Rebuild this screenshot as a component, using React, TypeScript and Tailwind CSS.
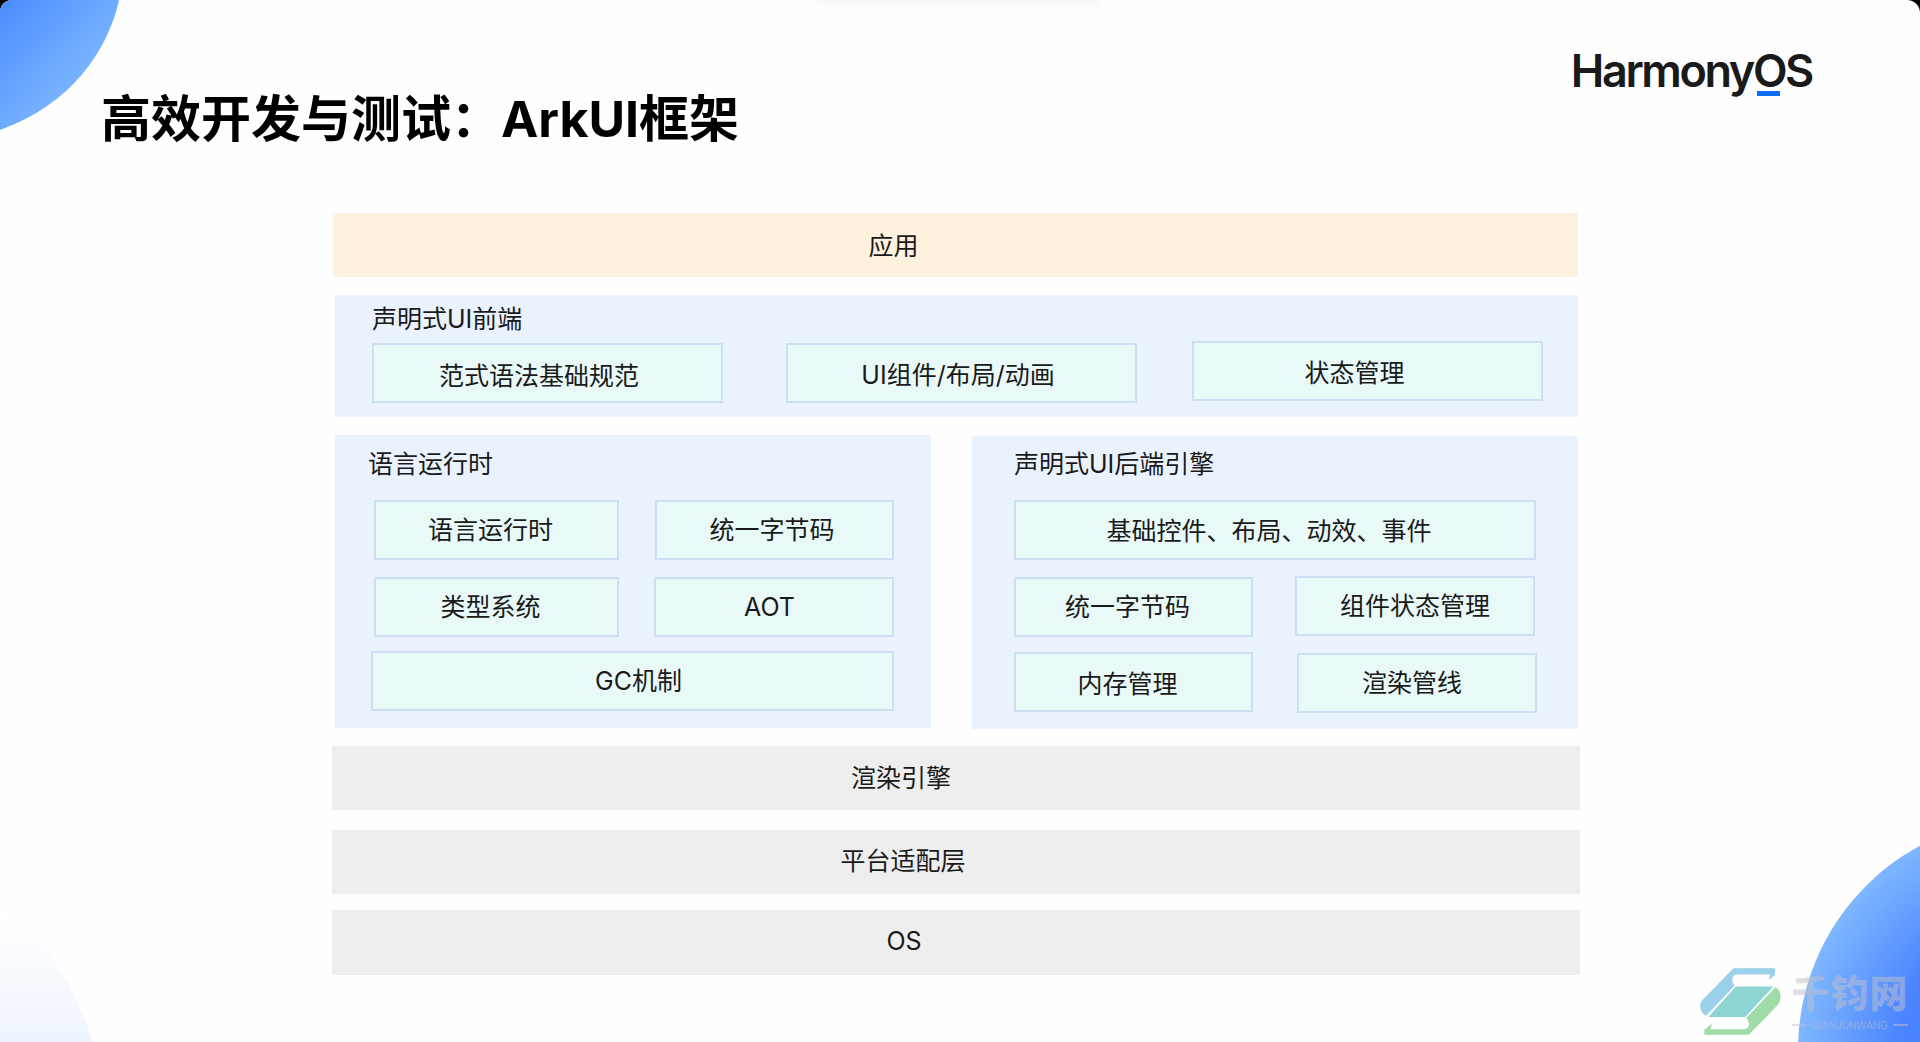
const Box = ({ t, c }: { t: string; c: string }) => (
  <div className={`flex items-center justify-center border-[2px] border-[#cbdef2] bg-[#e9f9f8] text-[25px] leading-none text-[#1a1a1a] ${c}`}>{t}</div>
);

const Bar = ({ t, c }: { t: string; c: string }) => (
  <div className={`flex items-center justify-center text-[25px] leading-none text-[#1a1a1a] ${c}`}>{t}</div>
);

export default function App() {
  return (
    <div className="h-[1042px] w-[1920px] bg-black">
      <div className="relative h-[1042px] w-[1920px] overflow-hidden rounded-tl-[12px] rounded-tr-[13px] bg-[#fefefe] font-['Inter','Noto_Sans_CJK_SC',sans-serif]">
        <svg className="absolute left-0 top-0 h-[1042px] w-[1920px]" viewBox="0 0 1920 1042">
          <defs>
            <linearGradient id="tl" x1="0" y1="0" x2="1" y2="1">
              <stop offset="0" stopColor="#4a8cff" />
              <stop offset="1" stopColor="#93c9ff" />
            </linearGradient>
            <radialGradient id="br" gradientUnits="userSpaceOnUse" cx="2030" cy="1050" r="235">
              <stop offset="0.55" stopColor="#4a84ff" />
              <stop offset="1" stopColor="#80b8ff" />
            </radialGradient>
            <linearGradient id="bl" x1="0" y1="0" x2="0" y2="1">
              <stop offset="0" stopColor="#ffffff" />
              <stop offset="1" stopColor="#eef4fe" />
            </linearGradient>
          </defs>
          <path d="M0 0H119C108 50 72 104 0 130Z" fill="url(#tl)" />
          <circle cx="2030" cy="1050" r="232" fill="url(#br)" />
          <path d="M0 912C38 925 72 980 93 1042H0Z" fill="url(#bl)" />
        </svg>
        <div className="absolute left-[815px] top-[-6px] h-[10px] w-[285px] rounded-full bg-[#f5f5f5] blur-[4px]" />

        <div className="relative flex h-full flex-col">
          <header className="flex h-[213px] shrink-0 items-start justify-between">
            <h1 className="ml-[101px] mt-[85px] text-[50px] font-bold leading-[68px] text-black">高效开发与测试：ArkUI框架</h1>
            <div className="relative mr-[108px] mt-[44px] text-[45px] font-semibold leading-[54px] tracking-[-2.4px] text-[#1a1a1a]">
              HarmonyOS
              <span className="absolute left-[186px] top-[47px] h-[5px] w-[23px] bg-[#0a6cff]" />
            </div>
          </header>

          <main className="ml-[332px] flex w-[1248px] flex-col">
            <Bar t="应用" c="ml-[1px] h-[64px] w-[1245px] bg-[#fef1dd] pr-[124px] pt-[2px]" />

            <section className="ml-[3px] mt-[18px] h-[122px] w-[1243px] bg-[#eaf2fe] pl-[37px] pt-[7px]">
              <div className="text-[25px] leading-[34px] text-[#1a1a1a]">声明式UI前端</div>
              <div className="mt-[7px] flex items-start">
                <Box t="范式语法基础规范" c="h-[60px] w-[351px] pr-[17px] pt-[7px]" />
                <Box t="UI组件/布局/动画" c="ml-[63px] h-[60px] w-[351px] pr-[7px] pt-[5px]" />
                <Box t="状态管理" c="ml-[55px] mt-[-2px] h-[60px] w-[351px] pr-[26px] pt-[5px]" />
              </div>
            </section>

            <div className="ml-[3px] mt-[18px] flex items-start">
              <section className="h-[293px] w-[596px] bg-[#eaf2fe] pl-[36px] pt-[12px]">
                <div className="ml-[-3px] text-[25px] leading-[34px] text-[#1a1a1a]">语言运行时</div>
                <div className="mt-[19px] flex">
                  <Box t="语言运行时" c="ml-[3px] h-[60px] w-[245px] pr-[12px]" />
                  <Box t="统一字节码" c="ml-[36px] h-[60px] w-[239px] pr-[5px]" />
                </div>
                <div className="mt-[17px] flex">
                  <Box t="类型系统" c="ml-[3px] h-[60px] w-[245px] pr-[12px]" />
                  <Box t="AOT" c="ml-[35px] h-[60px] w-[240px] pr-[9px]" />
                </div>
                <Box t="GC机制" c="mt-[14px] h-[60px] w-[523px] pl-[12px]" />
              </section>

              <section className="ml-[41px] mt-[1px] h-[293px] w-[606px] bg-[#eaf2fe] pl-[42px] pt-[11px]">
                <div className="text-[25px] leading-[34px] text-[#1a1a1a]">声明式UI后端引擎</div>
                <div className="mt-[19px]">
                  <Box t="基础控件、布局、动效、事件" c="h-[60px] w-[522px] pr-[12px] pt-[2px]" />
                </div>
                <div className="mt-[16px] flex items-start">
                  <Box t="统一字节码" c="mt-[1px] h-[60px] w-[239px] pr-[12px]" />
                  <Box t="组件状态管理" c="ml-[42px] h-[60px] w-[240px]" />
                </div>
                <div className="mt-[15px] flex items-start">
                  <Box t="内存管理" c="h-[60px] w-[239px] pr-[12px] pt-[5px]" />
                  <Box t="渲染管线" c="ml-[44px] mt-[1px] h-[60px] w-[240px] pr-[10px]" />
                </div>
              </section>
            </div>

            <Bar t="渲染引擎" c="mt-[17px] h-[64px] w-[1248px] bg-[#eeeeee] pr-[110px]" />
            <Bar t="平台适配层" c="mt-[20px] h-[64px] w-[1248px] bg-[#eeeeee] pb-[2px] pr-[106px]" />
            <Bar t="OS" c="mt-[16px] h-[65px] w-[1248px] bg-[#eeeeee] pb-[2px] pr-[104px]" />
          </main>
        </div>

        <svg className="absolute left-[1697px] top-[965px]" width="88" height="73" viewBox="20 15 265 220">
          <path d="M130 25H255V45L236 60L241 44H140C124 44 122 68 134 76L48 168C30 160 22 135 38 118Z" fill="#9bd0ea" />
          <path d="M137 80H250L165 172H54Z" fill="#8dd4d2" />
          <path d="M256 82C272 90 278 115 264 135L176 225H42V210L66 192L60 209H165C180 205 180 185 168 175Z" fill="#9fdca8" />
        </svg>
        <div className="absolute left-[1792px] top-[968px] flex w-[116px] flex-col items-center">
          <div className="whitespace-nowrap text-[38px] font-black leading-[50px] tracking-[1px] text-[#c1c0c8]/50">千钧网</div>
          <div className="mt-[1px] flex w-full items-center justify-between">
            <span className="h-[2px] w-[14px] bg-[#c1c0c8]/50" />
            <span className="text-[10px] leading-[12px] text-[#c1c0c8]/50">QIANJUNWANG</span>
            <span className="h-[2px] w-[15px] bg-[#c1c0c8]/50" />
          </div>
        </div>
      </div>
    </div>
  );
}
